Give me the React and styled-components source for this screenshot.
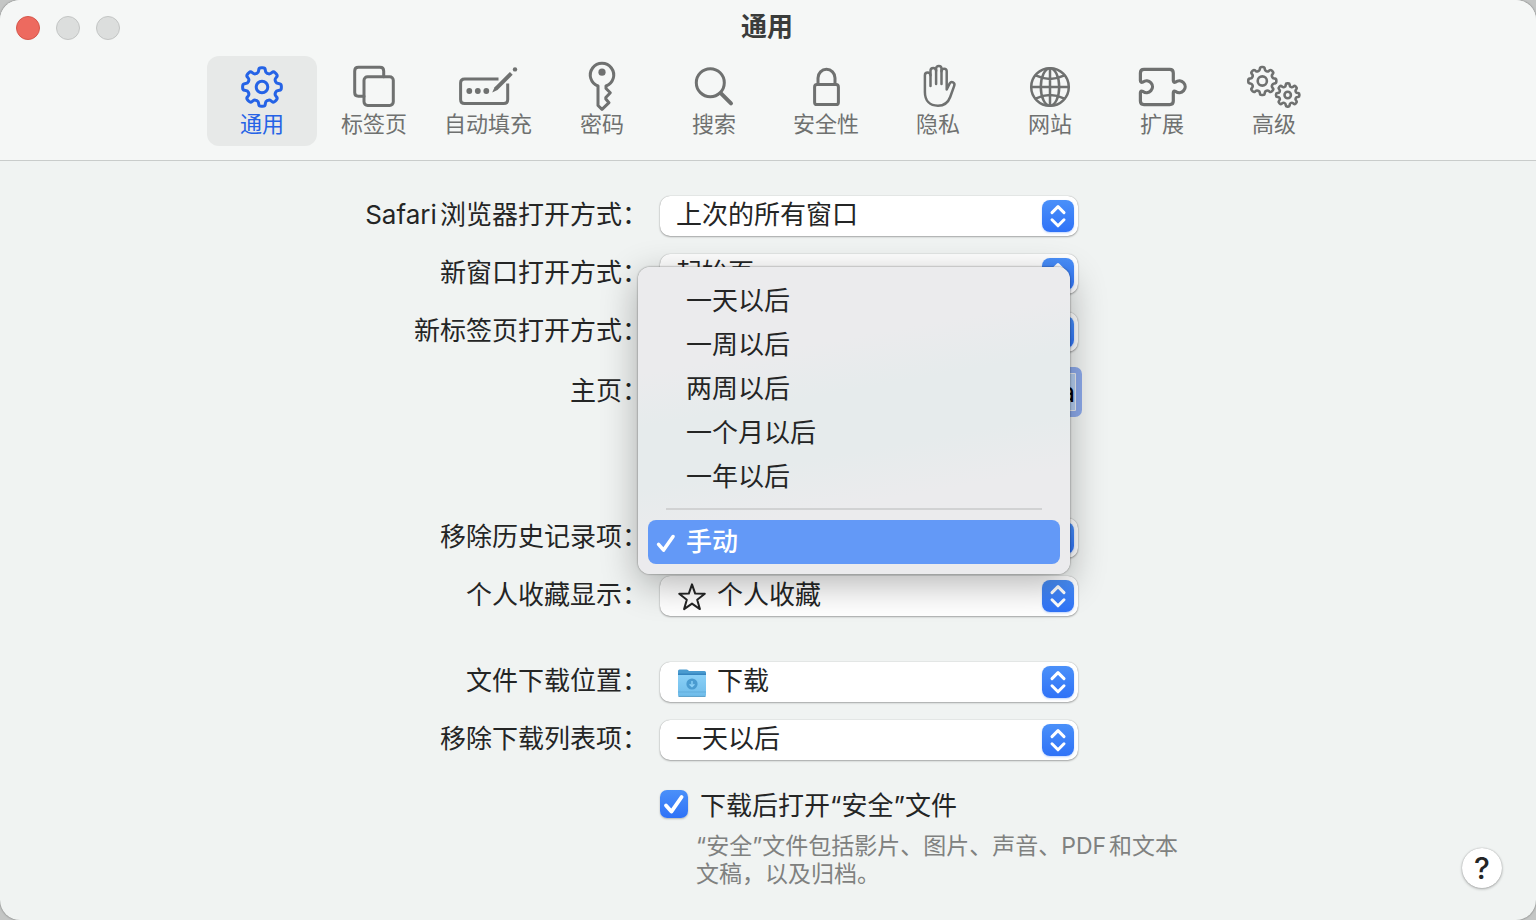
import React, { useState } from 'react';
import styled, { createGlobalStyle, css } from 'styled-components';

const GlobalStyle = createGlobalStyle`
  * {
    box-sizing: border-box;
  }

  body {
    margin: 0;
    background: #c4c6c5;
    font-family: Inter, 'Noto Sans CJK SC', sans-serif;
    color: #242525;
    text-autospace: normal;
  }

  button,
  input,
  select {
    font-family: inherit;
    color: inherit;
  }
`;

// Outline of a cog with eight rounded teeth
const gearPath = (cx, cy, outer, inner) => {
  const corners = [];
  for (let i = 0; i < 8; i += 1) {
    const base = i * 45;
    [[-14, inner], [-9, outer], [9, outer], [14, inner]].forEach(([offset, radius]) => {
      const angle = ((base + offset) * Math.PI) / 180;
      corners.push([cx + radius * Math.cos(angle), cy + radius * Math.sin(angle)]);
    });
  }
  const towards = (a, b, t) => [a[0] + (b[0] - a[0]) * t, a[1] + (b[1] - a[1]) * t];
  const parts = corners.map((corner, i) => {
    const previous = corners[(i + corners.length - 1) % corners.length];
    const next = corners[(i + 1) % corners.length];
    const start = towards(corner, previous, 0.38);
    const end = towards(corner, next, 0.38);
    return `${i === 0 ? 'M' : 'L'}${start.join(' ')}Q${corner.join(' ')} ${end.join(' ')}`;
  });
  return `${parts.join('')}Z`;
};

const icons = {
  general: (
    <>
      <path d={gearPath(30, 24, 19.6, 14.8)} />
      <circle cx="30" cy="24" r="5.8" />
    </>
  ),
  tabs: (
    <>
      <rect x="20" y="13.7" width="29.3" height="28.7" rx="3.6" />
      <path d="M39.7 13.7V8q0-3.7-3.7-3.7H14.4q-3.7 0-3.7 3.7v21.6q0 3.7 3.7 3.7H20" />
    </>
  ),
  autofill: (
    <>
      <path strokeLinecap="butt" d="M40.5 16H6.6q-4 0-4 4v16.4q0 4 4 4h39.1q4 0 4-4V20.4" />
      <g fill="currentColor" stroke="none">
        <circle cx="11.3" cy="28" r="2.9" />
        <circle cx="19.8" cy="28" r="2.9" />
        <circle cx="28.3" cy="28" r="2.9" />
        <path d="M34.2 29.6l2.4-5.4L51.9 9l2.8 2.8-15.2 15.2z" />
        <circle cx="57" cy="6.4" r="2.2" />
      </g>
    </>
  ),
  passwords: (
    <>
      <path d="M26 23a11.7 11.7 0 1 1 8 0v2.5l4.3 4.2-4.5 4.8V36l3.2 3.7-7 6.6-4-3.8z" />
      <circle cx="30" cy="9.2" r="3.6" fill="currentColor" stroke="none" />
    </>
  ),
  search: (
    <>
      <circle cx="26.3" cy="19.7" r="14" />
      <path strokeWidth="4" d="M37 30.4l10 10" />
    </>
  ),
  security: (
    <>
      <rect x="18.6" y="21.6" width="23.8" height="20" rx="2.4" />
      <path d="M22 21.6V15a8.5 8.7 0 0 1 17 0v6.6" />
    </>
  ),
  privacy: (
    <g strokeWidth="2.5">
      <path d="M22.5 23V12.3a2.8 2.8 0 0 0-5.6 0V29c0 9 5.1 13.7 13.1 13.7 6 0 10-2.7 12.2-8.7l4-11.2c1.2-3.4-2.8-5.2-4.5-2.4l-3 6.1V8.3a2.6 2.6 0 0 0-5.2 0" />
      <path d="M22.5 12.3V7.8a2.8 2.8 0 0 1 5.6 0V21" />
      <path d="M28.1 7.8V5.6a2.7 2.7 0 0 1 5.4 0V21" />
    </g>
  ),
  websites: (
    <g strokeWidth="2.5">
      <circle cx="30" cy="24" r="18.8" />
      <ellipse cx="30" cy="24" rx="9.2" ry="18.8" />
      <path d="M30 5.2v37.6M11.2 24h37.6M15.6 12.4q14.4 7 28.8 0M15.6 35.6q14.4-7 28.8 0" />
    </g>
  ),
  extensions: (
    <path
      strokeWidth="3.2"
      d="M8.4 17.6V10q0-3.6 3.6-3.6h25.7q3.6 0 3.6 3.6v7.6q0 2.4 2.4 1.4a5.9 5.9 0 1 1 0 9.4q-2.4-1-2.4 1.4V38q0 3.6-3.6 3.6H12q-3.6 0-3.6-3.6v-8.2q0-2.4 2.6-1.4a5.9 5.9 0 1 0 0-9.4q-2.6 1-2.6-1.4z"
    />
  ),
  advanced: (
    <g strokeWidth="2.6">
      <path d={gearPath(18.3, 18, 14.2, 10.8)} />
      <circle cx="18.3" cy="18" r="4.6" />
      <path d={gearPath(43.7, 32, 11.8, 8.8)} />
      <circle cx="43.7" cy="32" r="3.2" />
    </g>
  ),
};

const tabs = [
  { id: 'general', label: '通用' },
  { id: 'tabs', label: '标签页' },
  { id: 'autofill', label: '自动填充' },
  { id: 'passwords', label: '密码' },
  { id: 'search', label: '搜索' },
  { id: 'security', label: '安全性' },
  { id: 'privacy', label: '隐私' },
  { id: 'websites', label: '网站' },
  { id: 'extensions', label: '扩展' },
  { id: 'advanced', label: '高级' },
];

const historyOptions = ['一天以后', '一周以后', '两周以后', '一个月以后', '一年以后'];

const StarIcon = () => (
  <svg width="30" height="30" viewBox="0 0 30 30" fill="none" stroke="currentColor" strokeWidth="2" strokeLinejoin="round">
    <path d="M15 2.4l3.2 9.2 9.6.2-7.6 5.9 2.7 9.4-7.9-5.5-7.9 5.5 2.7-9.4-7.6-5.9 9.6-.2z" />
  </svg>
);

const FolderIcon = () => (
  <svg width="30" height="30" viewBox="0 0 30 30">
    <defs>
      <linearGradient id="folderFront" x1="0" y1="0" x2="0" y2="1">
        <stop offset="0" stopColor="#8ad0f7" />
        <stop offset="1" stopColor="#6fbcea" />
      </linearGradient>
    </defs>
    <path d="M1 3q0-1.5 1.5-1.5h7q1 0 1.8.8l.6.7h15.6Q29 3 29 4.5V10H1z" fill="#4a9bd0" />
    <path d="M1 5.5h28v2H1z" fill="#3484bf" />
    <path d="M1 7h28v20q0 1.5-1.5 1.5h-25Q1 28.500 1 27z" fill="url(#folderFront)" />
    <path d="M1 24h28" stroke="#62addb" />
    <path d="M1.5 28.400h27" stroke="#569cc7" />
    <circle cx="15" cy="16" r="5.6" fill="#4a9bd0" />
    <path d="M15 13v5.400m-2.400-2.200l2.400 2.400 2.400-2.400" fill="none" stroke="#8ad0f7" strokeWidth="1.4" />
  </svg>
);

const CheckIcon = () => (
  <svg width="28" height="28" viewBox="0 0 28 28" fill="none" stroke="#fff" strokeWidth="3.8" strokeLinecap="round" strokeLinejoin="round">
    <path d="M6 15.400l5.400 6.200L21.600 7" />
  </svg>
);

const PopUp = ({ id, value, icon, children }) => (
  <PopUpBox>
    {icon && <PopUpIcon>{icon}</PopUpIcon>}
    <PopUpSelect id={id} defaultValue={value} $withIcon={Boolean(icon)}>
      <option>{value}</option>
    </PopUpSelect>
    <Stepper>
      <svg width="32" height="32" viewBox="0 0 32 32" fill="none" stroke="#fff" strokeWidth="3" strokeLinecap="round" strokeLinejoin="round">
        <path d="M10 12.600l6-6 6 6M10 19.800l6 6 6-6" />
      </svg>
    </Stepper>
    {children}
  </PopUpBox>
);

const App = () => {
  const [activeTab, setActiveTab] = useState('general');
  const [openSafe, setOpenSafe] = useState(true);

  return (
    <Window>
      <GlobalStyle />
      <Header>
        <TitleBar>
          <WindowButtons>
            <WindowButton type="button" aria-label="关闭" $close />
            <WindowButton type="button" aria-label="最小化" disabled />
            <WindowButton type="button" aria-label="缩放" disabled />
          </WindowButtons>
          <Title>通用</Title>
        </TitleBar>
        <Toolbar>
          {tabs.map((tab) => (
            <ToolbarButton
              key={tab.id}
              type="button"
              $active={tab.id === activeTab}
              onClick={() => setActiveTab(tab.id)}
            >
              <ToolbarIcon viewBox="0 0 60 48">{icons[tab.id]}</ToolbarIcon>
              {tab.label}
            </ToolbarButton>
          ))}
        </Toolbar>
      </Header>

      <Pane>
        <Form>
          <Row>
            <Label htmlFor="open-with">Safari浏览器打开方式：</Label>
            <PopUp id="open-with" value="上次的所有窗口" />
          </Row>
          <Row>
            <Label htmlFor="new-window">新窗口打开方式：</Label>
            <PopUp id="new-window" value="起始页" />
          </Row>
          <Row>
            <Label htmlFor="new-tab">新标签页打开方式：</Label>
            <PopUp id="new-tab" value="起始页" />
          </Row>
          <Row $space={20}>
            <Label htmlFor="home-page">主页：</Label>
            <HomeInput id="home-page" type="text" defaultValue="a" />
          </Row>
          <Row $space={106}>
            <Label htmlFor="history">移除历史记录项：</Label>
            <PopUp id="history" value="手动">
              <Menu role="listbox" aria-label="移除历史记录项">
                {historyOptions.map((option) => (
                  <MenuItem key={option} type="button" role="option" aria-selected="false">
                    {option}
                  </MenuItem>
                ))}
                <Separator />
                <MenuItem type="button" role="option" aria-selected="true" $selected>
                  <MenuCheck>
                    <CheckIcon />
                  </MenuCheck>
                  手动
                </MenuItem>
              </Menu>
            </PopUp>
          </Row>
          <Row>
            <Label htmlFor="favorites">个人收藏显示：</Label>
            <PopUp id="favorites" value="个人收藏" icon={<StarIcon />} />
          </Row>
          <Row $space={46}>
            <Label htmlFor="download-location">文件下载位置：</Label>
            <PopUp id="download-location" value="下载" icon={<FolderIcon />} />
          </Row>
          <Row>
            <Label htmlFor="download-list">移除下载列表项：</Label>
            <PopUp id="download-list" value="一天以后" />
          </Row>
          <SafeFiles>
            <CheckRow>
              <CheckHolder>
                <Checkbox
                  id="open-safe"
                  type="checkbox"
                  checked={openSafe}
                  onChange={(event) => setOpenSafe(event.target.checked)}
                />
                {openSafe && <CheckIcon />}
              </CheckHolder>
              <label htmlFor="open-safe">下载后打开“安全”文件</label>
            </CheckRow>
            <Note>
              “安全”文件包括影片、图片、声音、PDF和文本
              <br />
              文稿，以及归档。
            </Note>
          </SafeFiles>
        </Form>
        <HelpButton type="button">?</HelpButton>
      </Pane>
    </Window>
  );
};

const Window = styled.div`
  display: flex;
  flex-direction: column;
  min-height: 100vh;
  overflow: hidden;
  background: #f0f3f2;
  border-radius: 20px;
  box-shadow: 0 0 2px rgba(0, 0, 0, 0.5);
`;

const Header = styled.header`
  padding-bottom: 14px;
  background: #f5f7f6;
  border-bottom: 1px solid #c9cccb;
`;

const TitleBar = styled.div`
  display: grid;
  grid-template-columns: 1fr auto 1fr;
  align-items: center;
  height: 56px;
  padding: 0 18px 0 16px;
`;

const WindowButtons = styled.div`
  display: flex;
  gap: 16px;
`;

const WindowButton = styled.button`
  width: 24px;
  height: 24px;
  padding: 0;
  border: 1px solid ${(props) => (props.$close ? '#d5574b' : '#c3c5c4')};
  border-radius: 50%;
  background: ${(props) => (props.$close ? '#ed6a5f' : '#dcdedd')};
`;

const Title = styled.h1`
  margin: 0;
  padding-bottom: 2px;
  font-size: 26px;
  font-weight: 700;
  line-height: 32px;
  color: #3a3c3b;
`;

const Toolbar = styled.nav`
  display: flex;
  justify-content: center;
  gap: 2px;
`;

const ToolbarButton = styled.button`
  display: flex;
  flex-direction: column;
  align-items: center;
  min-width: 110px;
  height: 90px;
  padding: 7px 13px 9px;
  border: none;
  border-radius: 12px;
  background: ${(props) => (props.$active ? '#e7e9e8' : 'transparent')};
  color: ${(props) => (props.$active ? '#2563e6' : '#6f7170')};
  font-size: 22px;
  line-height: 26px;
`;

const ToolbarIcon = styled.svg`
  flex: none;
  width: 60px;
  height: 48px;
  overflow: visible;
  fill: none;
  stroke: currentColor;
  stroke-width: 3px;
  stroke-linecap: round;
  stroke-linejoin: round;
`;

const Pane = styled.main`
  display: grid;
  flex: 1;
  grid-template-columns: 1fr auto 1fr;
  padding-top: 35px;
`;

const Form = styled.form`
  grid-column: 2;
  font-size: 26px;
`;

const Row = styled.div`
  display: grid;
  grid-template-columns: 286px 418px;
  align-items: center;
  column-gap: 9px;
  height: 40px;
  margin-top: ${(props) => props.$space || 18}px;

  &:first-child {
    margin-top: 0;
  }
`;

const Label = styled.label`
  padding: 0 3px 2px 0;
  text-align: right;
  line-height: 38px;
  white-space: nowrap;
`;

const PopUpBox = styled.div`
  position: relative;
  height: 40px;
`;

const PopUpSelect = styled.select`
  display: block;
  width: 100%;
  height: 40px;
  padding: 0 44px 3px ${(props) => (props.$withIcon ? 57 : 16)}px;
  appearance: none;
  border: none;
  border-radius: 10px;
  outline: none;
  background: #fff;
  box-shadow: 0 0 1px rgba(0, 0, 0, 0.35), 0 1px 2px rgba(0, 0, 0, 0.3);
  font-size: 26px;
`;

const PopUpIcon = styled.span`
  position: absolute;
  top: 6px;
  left: 17px;
  height: 30px;
  pointer-events: none;

  svg {
    display: block;
  }
`;

const Stepper = styled.span`
  position: absolute;
  top: 4px;
  right: 4px;
  width: 32px;
  height: 32px;
  border-radius: 8px;
  background: linear-gradient(#4a90f9, #2f72f7);
  box-shadow: 0 1px 2px rgba(47, 114, 247, 0.3);
  pointer-events: none;
`;

const HomeInput = styled.input`
  width: 416px;
  height: 38px;
  padding: 0;
  border: 1px solid #e8eaf0;
  outline: 6px solid #8ca9ea;
  border-radius: 1px;
  background: #b4cdf0;
  color: #000;
  font-size: 26px;
  text-align: right;
`;

const Menu = styled.div`
  position: absolute;
  z-index: 2;
  right: 8px;
  bottom: -16px;
  left: -22px;
  padding: 12px 10px 10px;
  border-radius: 12px;
  background: linear-gradient(170deg, #ebebed 28%, #e6ebec 42%, #e6ebec 58%, #ebebed 72%);
  box-shadow: 0 0 2px rgba(0, 0, 0, 0.55), 0 10px 36px rgba(0, 0, 0, 0.3);
`;

const MenuItem = styled.button`
  position: relative;
  display: block;
  width: 100%;
  height: 44px;
  padding: 0 0 0 38px;
  border: none;
  border-radius: 8px;
  background: transparent;
  font-size: 26px;
  line-height: 44px;
  text-align: left;

  ${(props) =>
    props.$selected &&
    css`
      background: #6399f7;
      color: #fff;
      font-weight: 500;
    `}
`;

const MenuCheck = styled.span`
  position: absolute;
  top: 10px;
  left: 5px;
  height: 26px;

  svg {
    display: block;
    width: 26px;
    height: 26px;
  }
`;

const Separator = styled.hr`
  height: 2px;
  margin: 9px 18px 10px;
  border: none;
  background: #d1d2d3;
`;

const SafeFiles = styled.div`
  width: 512px;
  margin: 30px 0 24px 294px;
`;

const CheckRow = styled.div`
  display: flex;
  align-items: center;
  gap: 12px;
  height: 28px;
  padding-left: 1px;

  label {
    padding-bottom: 2px;
  }
`;

const CheckHolder = styled.span`
  position: relative;
  width: 28px;
  height: 28px;

  svg {
    position: absolute;
    inset: 0;
    pointer-events: none;
  }
`;

const Checkbox = styled.input`
  display: block;
  width: 28px;
  height: 28px;
  margin: 0;
  appearance: none;
  border-radius: 7px;
  background: #fff;
  box-shadow: 0 1px 2px rgba(0, 0, 0, 0.25);

  &:checked {
    background: linear-gradient(#4a90f9, #2f72f7);
  }
`;

const Note = styled.p`
  margin: 14px 0 0 37px;
  color: #7f8180;
  font-size: 23px;
  line-height: 28px;
  white-space: nowrap;
`;

const HelpButton = styled.button`
  grid-column: 3;
  align-self: end;
  justify-self: end;
  width: 40px;
  height: 40px;
  margin: 0 34px 32px 0;
  padding: 0;
  border: none;
  border-radius: 50%;
  background: #fff;
  box-shadow: 0 0 1px rgba(0, 0, 0, 0.3), 0 1px 3px rgba(0, 0, 0, 0.3);
  font-size: 30px;
  font-weight: 500;
  line-height: 40px;
`;

export default App;
